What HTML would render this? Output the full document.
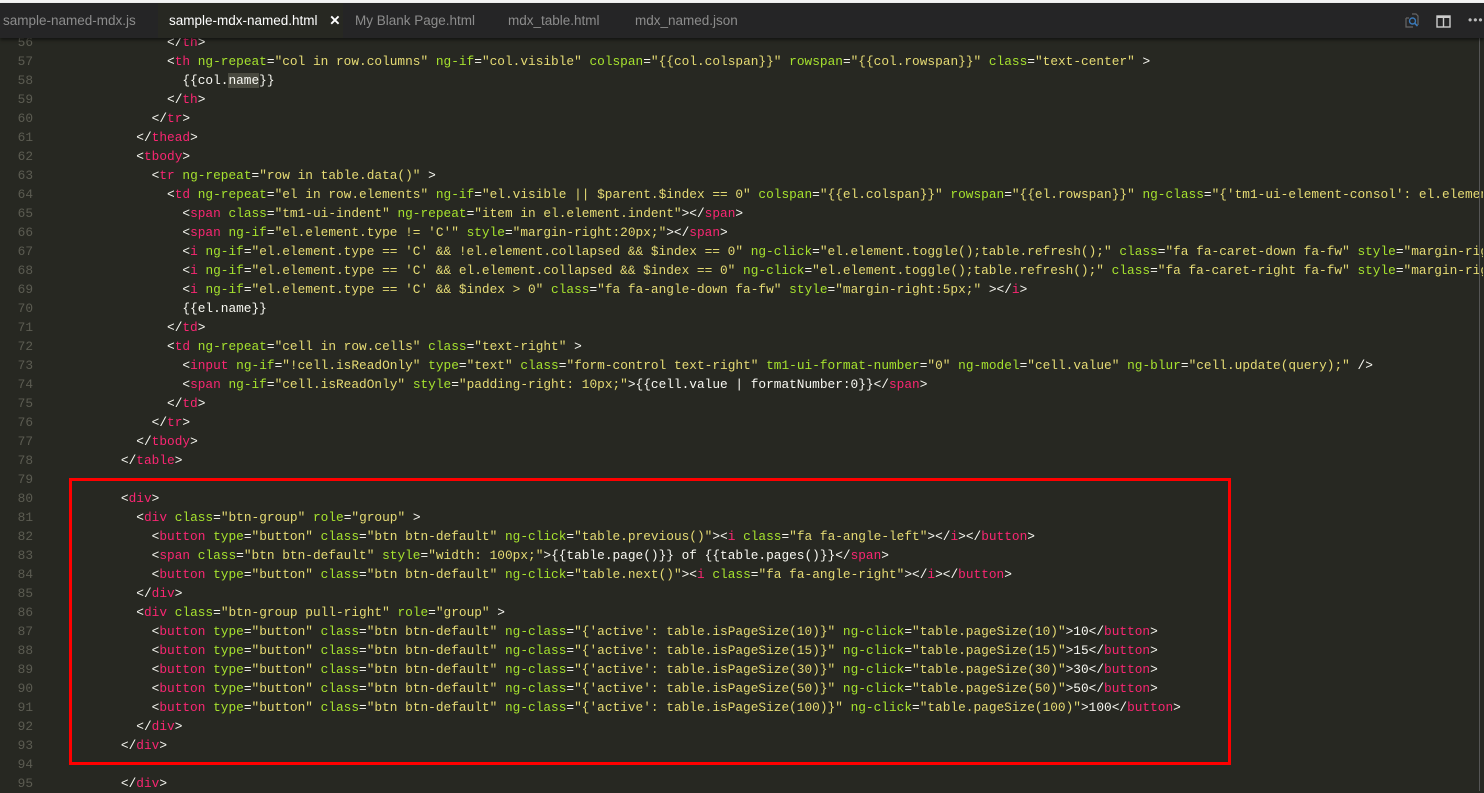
<!DOCTYPE html>
<html><head><meta charset="utf-8"><style>
html,body{margin:0;padding:0;width:1484px;height:791px;overflow:hidden;background:#272822;}
#top{position:absolute;left:0;top:0;width:1484px;height:3px;background:#f3f3f3;}
#tabs{position:absolute;left:0;top:3px;width:1484px;height:35px;background:#252526;font-family:"Liberation Sans",sans-serif;font-size:13.5px;box-shadow:0 2px 3px rgba(0,0,0,.5);z-index:2}
.tab{position:absolute;top:0;height:35px;line-height:35px;color:#8c8c8c;padding:0 0 0 3px;}
.tab.act{background:#272822;color:#fff;}
#gut{position:absolute;left:0;top:33px;width:33px;text-align:right;font-family:"Liberation Mono",monospace;font-size:12.8px;line-height:19px;color:#5c5c52;}
#code{position:absolute;left:59.5px;top:33px;width:1423px;overflow:hidden;font-family:"Liberation Mono",monospace;font-size:12.8px;line-height:19px;color:#f8f8f2;white-space:pre;}
r{color:#f92672}g{color:#a6e22e}y{color:#e6db74}
#box{position:absolute;left:69px;top:478px;width:1156px;height:281px;border:3px solid #f00;}
#sb{position:absolute;left:1479px;top:38px;width:1px;height:753px;background:#555;}
</style></head><body>
<div id="top"></div>
<div id="tabs">
<div class="tab" style="left:0;width:155px">sample-named-mdx.js</div>
<div class="tab act" style="left:158px;width:185px;padding-left:11px;box-sizing:border-box">sample-mdx-named.html <span style="margin-left:8px;font-weight:bold">✕</span></div>
<div class="tab" style="left:352px">My Blank Page.html</div>
<div class="tab" style="left:505px">mdx_table.html</div>
<div class="tab" style="left:632px">mdx_named.json</div>
<svg style="position:absolute;left:1403px;top:9px" width="18" height="18" viewBox="0 0 18 18"><path d="M3 6h3M3 6v9h7M9 2h4l2 2v9" fill="none" stroke="#666" stroke-width="1.2"/><circle cx="9.5" cy="9" r="3" fill="none" stroke="#3a79b8" stroke-width="1.4"/><path d="M11.5 11l3 3" stroke="#3a79b8" stroke-width="1.6"/></svg>
<svg style="position:absolute;left:1436px;top:12px" width="16" height="14" viewBox="0 0 16 14"><rect x="1" y="1" width="13" height="11" fill="none" stroke="#ccc" stroke-width="1.4"/><rect x="1" y="1" width="13" height="2" fill="#ccc"/><path d="M7.5 2v10" stroke="#ccc" stroke-width="1.4"/></svg>
<div style="position:absolute;left:1468px;top:0;line-height:35px;color:#bbb;font-size:12px;letter-spacing:1px">•••</div>
</div>
<div id="gut">56<br>57<br>58<br>59<br>60<br>61<br>62<br>63<br>64<br>65<br>66<br>67<br>68<br>69<br>70<br>71<br>72<br>73<br>74<br>75<br>76<br>77<br>78<br>79<br>80<br>81<br>82<br>83<br>84<br>85<br>86<br>87<br>88<br>89<br>90<br>91<br>92<br>93<br>94<br>95</div>
<div id="code">              &lt;/<r>th</r>&gt;
              &lt;<r>th</r> <g>ng-repeat</g>=<y>"col in row.columns"</y> <g>ng-if</g>=<y>"col.visible"</y> <g>colspan</g>=<y>"{{col.colspan}}"</y> <g>rowspan</g>=<y>"{{col.rowspan}}"</y> <g>class</g>=<y>"text-center"</y> &gt;
                {{col.<span style="background:#4a4a40">name</span>}}
              &lt;/<r>th</r>&gt;
            &lt;/<r>tr</r>&gt;
          &lt;/<r>thead</r>&gt;
          &lt;<r>tbody</r>&gt;
            &lt;<r>tr</r> <g>ng-repeat</g>=<y>"row in table.data()"</y> &gt;
              &lt;<r>td</r> <g>ng-repeat</g>=<y>"el in row.elements"</y> <g>ng-if</g>=<y>"el.visible || $parent.$index == 0"</y> <g>colspan</g>=<y>"{{el.colspan}}"</y> <g>rowspan</g>=<y>"{{el.rowspan}}"</y> <g>ng-class</g>=<y>"{'tm1-ui-element-consol': el.element.isConsolidated}"</y>
                &lt;<r>span</r> <g>class</g>=<y>"tm1-ui-indent"</y> <g>ng-repeat</g>=<y>"item in el.element.indent"</y>&gt;&lt;/<r>span</r>&gt;
                &lt;<r>span</r> <g>ng-if</g>=<y>"el.element.type != 'C'"</y> <g>style</g>=<y>"margin-right:20px;"</y>&gt;&lt;/<r>span</r>&gt;
                &lt;<r>i</r> <g>ng-if</g>=<y>"el.element.type == 'C' &amp;&amp; !el.element.collapsed &amp;&amp; $index == 0"</y> <g>ng-click</g>=<y>"el.element.toggle();table.refresh();"</y> <g>class</g>=<y>"fa fa-caret-down fa-fw"</y> <g>style</g>=<y>"margin-right:5px;"</y>
                &lt;<r>i</r> <g>ng-if</g>=<y>"el.element.type == 'C' &amp;&amp; el.element.collapsed &amp;&amp; $index == 0"</y> <g>ng-click</g>=<y>"el.element.toggle();table.refresh();"</y> <g>class</g>=<y>"fa fa-caret-right fa-fw"</y> <g>style</g>=<y>"margin-right:5px;"</y>
                &lt;<r>i</r> <g>ng-if</g>=<y>"el.element.type == 'C' &amp;&amp; $index &gt; 0"</y> <g>class</g>=<y>"fa fa-angle-down fa-fw"</y> <g>style</g>=<y>"margin-right:5px;"</y> &gt;&lt;/<r>i</r>&gt;
                {{el.name}}
              &lt;/<r>td</r>&gt;
              &lt;<r>td</r> <g>ng-repeat</g>=<y>"cell in row.cells"</y> <g>class</g>=<y>"text-right"</y> &gt;
                &lt;<r>input</r> <g>ng-if</g>=<y>"!cell.isReadOnly"</y> <g>type</g>=<y>"text"</y> <g>class</g>=<y>"form-control text-right"</y> <g>tm1-ui-format-number</g>=<y>"0"</y> <g>ng-model</g>=<y>"cell.value"</y> <g>ng-blur</g>=<y>"cell.update(query);"</y> /&gt;
                &lt;<r>span</r> <g>ng-if</g>=<y>"cell.isReadOnly"</y> <g>style</g>=<y>"padding-right: 10px;"</y>&gt;{{cell.value | formatNumber:0}}&lt;/<r>span</r>&gt;
              &lt;/<r>td</r>&gt;
            &lt;/<r>tr</r>&gt;
          &lt;/<r>tbody</r>&gt;
        &lt;/<r>table</r>&gt;

        &lt;<r>div</r>&gt;
          &lt;<r>div</r> <g>class</g>=<y>"btn-group"</y> <g>role</g>=<y>"group"</y> &gt;
            &lt;<r>button</r> <g>type</g>=<y>"button"</y> <g>class</g>=<y>"btn btn-default"</y> <g>ng-click</g>=<y>"table.previous()"</y>&gt;&lt;<r>i</r> <g>class</g>=<y>"fa fa-angle-left"</y>&gt;&lt;/<r>i</r>&gt;&lt;/<r>button</r>&gt;
            &lt;<r>span</r> <g>class</g>=<y>"btn btn-default"</y> <g>style</g>=<y>"width: 100px;"</y>&gt;{{table.page()}} of {{table.pages()}}&lt;/<r>span</r>&gt;
            &lt;<r>button</r> <g>type</g>=<y>"button"</y> <g>class</g>=<y>"btn btn-default"</y> <g>ng-click</g>=<y>"table.next()"</y>&gt;&lt;<r>i</r> <g>class</g>=<y>"fa fa-angle-right"</y>&gt;&lt;/<r>i</r>&gt;&lt;/<r>button</r>&gt;
          &lt;/<r>div</r>&gt;
          &lt;<r>div</r> <g>class</g>=<y>"btn-group pull-right"</y> <g>role</g>=<y>"group"</y> &gt;
            &lt;<r>button</r> <g>type</g>=<y>"button"</y> <g>class</g>=<y>"btn btn-default"</y> <g>ng-class</g>=<y>"{'active': table.isPageSize(10)}"</y> <g>ng-click</g>=<y>"table.pageSize(10)"</y>&gt;10&lt;/<r>button</r>&gt;
            &lt;<r>button</r> <g>type</g>=<y>"button"</y> <g>class</g>=<y>"btn btn-default"</y> <g>ng-class</g>=<y>"{'active': table.isPageSize(15)}"</y> <g>ng-click</g>=<y>"table.pageSize(15)"</y>&gt;15&lt;/<r>button</r>&gt;
            &lt;<r>button</r> <g>type</g>=<y>"button"</y> <g>class</g>=<y>"btn btn-default"</y> <g>ng-class</g>=<y>"{'active': table.isPageSize(30)}"</y> <g>ng-click</g>=<y>"table.pageSize(30)"</y>&gt;30&lt;/<r>button</r>&gt;
            &lt;<r>button</r> <g>type</g>=<y>"button"</y> <g>class</g>=<y>"btn btn-default"</y> <g>ng-class</g>=<y>"{'active': table.isPageSize(50)}"</y> <g>ng-click</g>=<y>"table.pageSize(50)"</y>&gt;50&lt;/<r>button</r>&gt;
            &lt;<r>button</r> <g>type</g>=<y>"button"</y> <g>class</g>=<y>"btn btn-default"</y> <g>ng-class</g>=<y>"{'active': table.isPageSize(100)}"</y> <g>ng-click</g>=<y>"table.pageSize(100)"</y>&gt;100&lt;/<r>button</r>&gt;
          &lt;/<r>div</r>&gt;
        &lt;/<r>div</r>&gt;

        &lt;/<r>div</r>&gt;</div>
<div id="box"></div>
<div id="sb"></div>
</body></html>
